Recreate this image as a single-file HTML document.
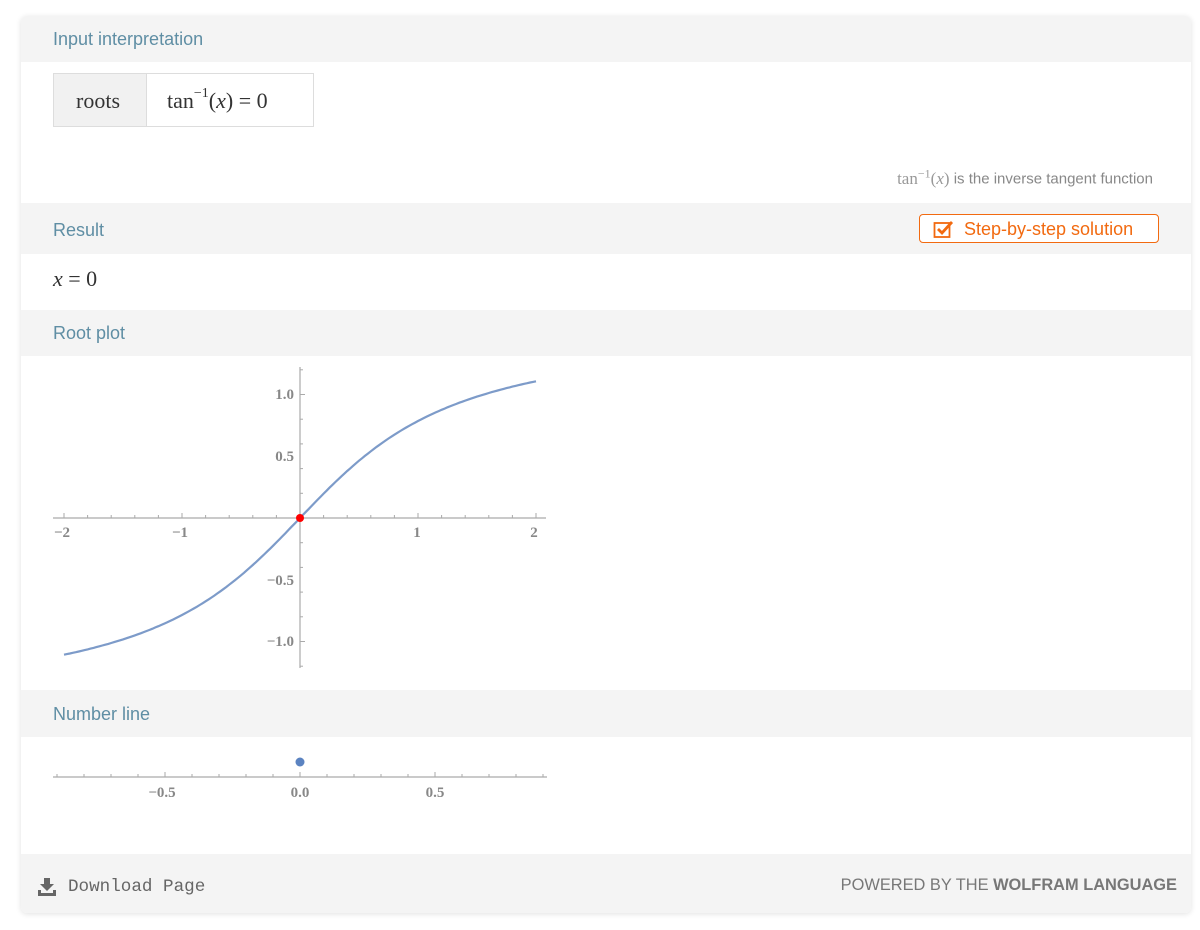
<!DOCTYPE html>
<html><head><meta charset="utf-8"><style>
body{margin:0;background:#fff;width:1200px;height:930px;overflow:hidden;font-family:"Liberation Sans",sans-serif;}
.card{position:absolute;left:21px;top:16px;width:1170px;height:897px;background:#fff;border-radius:6px;box-shadow:0 1px 6px rgba(0,0,0,0.12);overflow:hidden;}
.band{position:absolute;left:0;width:1170px;background:#f4f4f4;}
.lbl{position:absolute;left:32px;color:#5f8ea4;font-size:18px;}
.serif{font-family:"Liberation Serif",serif;color:#333;}
</style></head><body>
<div class="card">
<div class="band" style="top:0;height:46px"><div class="lbl" style="top:13px">Input interpretation</div></div>
<div style="position:absolute;left:32px;top:57px;width:259px;height:52px;border:1px solid #ddd;">
 <div style="position:absolute;left:0;top:0;width:92px;height:52px;background:#f1f1f1;border-right:1px solid #ddd"></div>
 <div class="serif" style="position:absolute;left:22px;top:14px;font-size:22px">roots</div>
 <div class="serif" style="position:absolute;left:113px;top:14px;font-size:22px">tan<sup style="font-size:14px;position:relative;top:-3px">−1</sup>(<i>x</i>) = 0</div>
</div>
<div style="position:absolute;right:38px;top:150px;font-size:15px;color:#888"><span class="serif" style="color:#999;font-size:17px">tan<sup style="font-size:12px">−1</sup>(<i>x</i>)</span> is the inverse tangent function</div>
<div class="band" style="top:187px;height:51px"><div class="lbl" style="top:17px">Result</div>
 <div style="position:absolute;left:898px;top:11px;width:238px;height:27px;border:1px solid #f26a10;border-radius:4px;background:#fff;color:#f26a10;font-size:18px;">
  <svg style="position:absolute;left:13px;top:4px" width="22" height="20" viewBox="0 0 22 20"><rect x="1.5" y="4" width="15" height="14" fill="none" stroke="#f26a10" stroke-width="1.8"/><path d="M5 10 L9 14 L19 3" fill="none" stroke="#f26a10" stroke-width="2.8"/></svg>
  <span style="position:absolute;left:44px;top:4px">Step-by-step solution</span></div>
</div>
<div class="serif" style="position:absolute;left:32px;top:250px;font-size:22px"><i>x</i> = 0</div>
<div class="band" style="top:294px;height:46px"><div class="lbl" style="top:13px">Root plot</div></div>
<svg style="position:absolute;left:0;top:340px" width="560" height="334" viewBox="21 356 560 334" font-family="Liberation Serif" font-size="15" font-weight="bold" fill="#888">
 <g stroke="#aaa" stroke-width="1.2">
  <line x1="53" y1="518" x2="546" y2="518"/><line x1="300" y1="367" x2="300" y2="668"/>
 </g>
 <g id="ticks" stroke="#aaa" stroke-width="1"></g>
 <path id="curve" fill="none" stroke="#7d9bc9" stroke-width="2.2"/>
 <circle cx="300" cy="518" r="4" fill="#f00"/>
 <text x="62" y="537" text-anchor="middle">−2</text><text x="180" y="537" text-anchor="middle">−1</text>
 <text x="417" y="537" text-anchor="middle">1</text><text x="534" y="537" text-anchor="middle">2</text>
 <text x="294" y="399" text-anchor="end">1.0</text><text x="294" y="461" text-anchor="end">0.5</text>
 <text x="294" y="585" text-anchor="end">−0.5</text><text x="294" y="646" text-anchor="end">−1.0</text>
</svg>
<div class="band" style="top:674px;height:47px"><div class="lbl" style="top:14px">Number line</div></div>
<svg style="position:absolute;left:0;top:721px" width="560" height="110" viewBox="21 737 560 110" font-family="Liberation Serif" font-size="15" font-weight="bold" fill="#888">
 <line x1="53" y1="777" x2="547" y2="777" stroke="#aaa" stroke-width="1.2"/>
 <g id="nt" stroke="#aaa" stroke-width="1"></g>
 <circle cx="300" cy="762" r="4.5" fill="#5b83c1"/>
 <text x="162" y="797" text-anchor="middle">−0.5</text><text x="300" y="797" text-anchor="middle">0.0</text><text x="435" y="797" text-anchor="middle">0.5</text>
</svg>
<div class="band" style="top:838px;height:59px">
 <svg style="position:absolute;left:17px;top:24px" width="18" height="18" viewBox="0 0 18 18"><path d="M6 0h6v6h4l-7 7-7-7h4z" fill="#666"/><path d="M0 12v6h18v-6h-3v3H3v-3z" fill="#666"/></svg>
 <div style="position:absolute;left:47px;top:23px;font-family:'Liberation Mono',monospace;font-size:17.6px;color:#666">Download Page</div>
 <div style="position:absolute;right:14px;top:22px;font-size:16.4px;color:#777">POWERED BY THE <b>WOLFRAM LANGUAGE</b></div>
</div>
</div>
<script>
var d="";for(var i=0;i<=160;i++){var x=-2+i*0.025;var px=300+118*x,py=518-123.5*Math.atan(x);d+=(i?"L":"M")+px.toFixed(1)+" "+py.toFixed(1);}
document.getElementById("curve").setAttribute("d",d);
var t="";for(var k=-10;k<=10;k++){var px=300+118*k*0.2;var h=(k%5==0)?5:3;t+='<line x1="'+px+'" y1="518" x2="'+px+'" y2="'+(518-h)+'"/>';}
for(var k=-6;k<=6;k++){var py=518-123.5*k*0.2;if(k==0)continue;var h=(k%5==0)?5:3;t+='<line x1="300" y1="'+py+'" x2="'+(300+h)+'" y2="'+py+'"/>';}
document.getElementById("ticks").innerHTML=t;
var n="";for(var k=-9;k<=9;k++){var px=300+270*k*0.1;var h=(k%5==0)?5:3;n+='<line x1="'+px+'" y1="777" x2="'+px+'" y2="'+(777-h)+'"/>';}
document.getElementById("nt").innerHTML=n;
</script>
</body></html>
